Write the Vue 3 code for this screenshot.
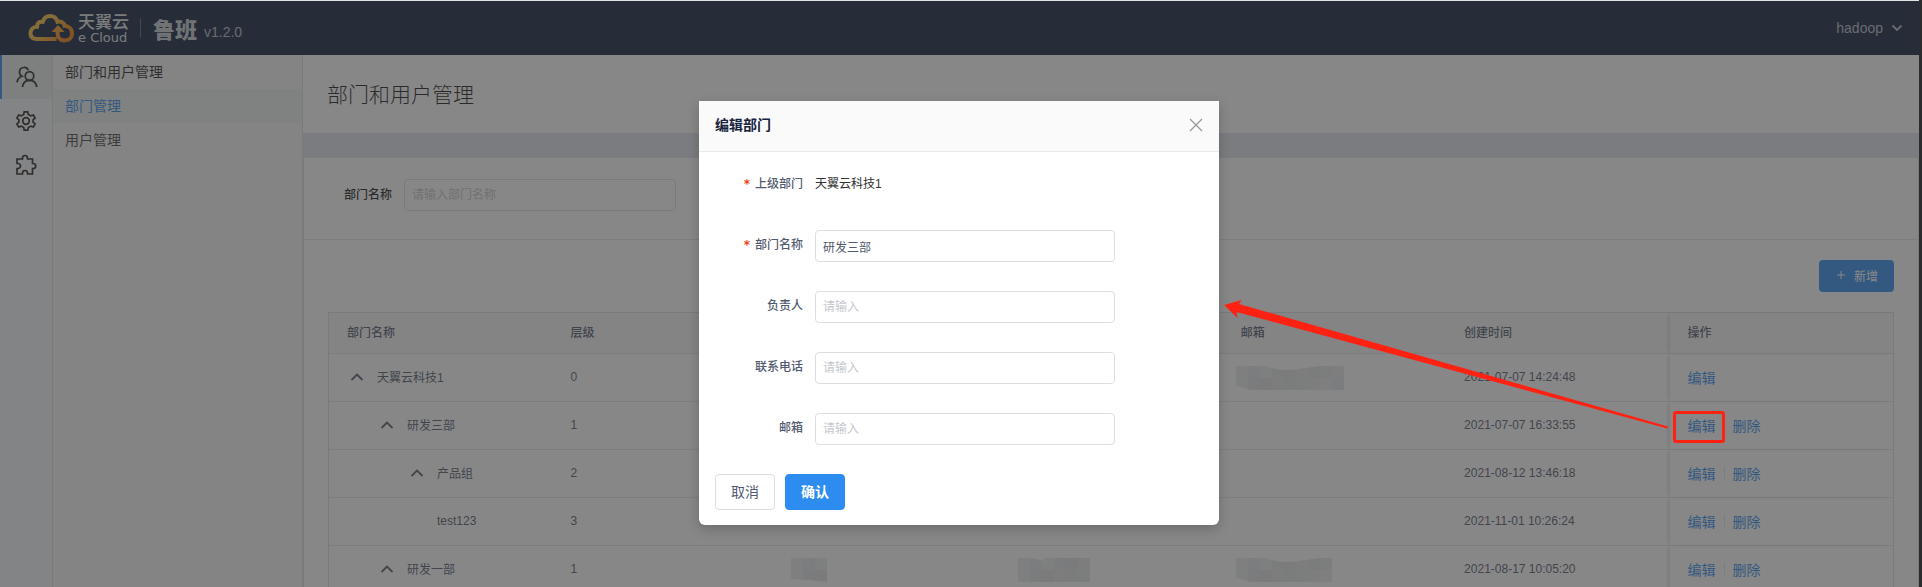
<script setup>
import { ref } from 'vue'

const keyword = ref('')
const form = ref({ name: '研发三部', owner: '', phone: '', email: '' })

const fields = [
  { key: 'name', label: '部门名称', required: true },
  { key: 'owner', label: '负责人' },
  { key: 'phone', label: '联系电话' },
  { key: 'email', label: '邮箱' },
]

const columns = ['部门名称', '层级', '负责人', '联系电话', '邮箱', '创建时间', '操作']

const rows = [
  { name: '天翼云科技1', level: 0, indent: 'indent-0', open: true, time: '2021-07-07 14:24:48', email: 9 },
  { name: '研发三部', level: 1, indent: 'indent-1', open: true, time: '2021-07-07 16:33:55', removable: true },
  { name: '产品组', level: 2, indent: 'indent-2', open: true, time: '2021-08-12 13:46:18', removable: true },
  { name: 'test123', level: 3, indent: 'indent-3', open: false, time: '2021-11-01 10:26:24', removable: true },
  { name: '研发一部', level: 1, indent: 'indent-1', open: true, time: '2021-08-17 10:05:20', removable: true, owner: 3, phone: 6, email: 8 },
]

const shades = ['#ebebea', '#e7e7e7', '#e4e6e9', '#e1e4e4', '#e9eaea', '#e4e7e6', '#e1e4e7', '#e9e9e9', '#e0e2e4']
function tiles(n) {
  const out = []
  for (let i = 0; i < n; i++) {
    out.push({ x: i * 12, y: 0, fill: shades[(i * 2) % 9] })
    out.push({ x: i * 12, y: 12, fill: shades[(i * 2 + 4) % 9] })
  }
  return out
}
</script>

<template>
  <div class="frame">
    <div class="shell">
      <header class="topbar">
        <svg class="cloud" viewBox="0 0 46 30" fill="none">
          <defs>
            <linearGradient id="gold" x1="0" y1="0" x2="1" y2="0.5">
              <stop offset="0" stop-color="#ffcb3c" />
              <stop offset="0.5" stop-color="#f8b53a" />
              <stop offset="1" stop-color="#f57d0c" />
            </linearGradient>
          </defs>
          <path d="M28.500 26H9C5 26 2.500 24 2.500 20.300C2.500 16.500 5.200 13.800 9 13.700C9 10 11.500 8.300 14.800 8.700C16 5 18.500 3 22 3C25.800 3 28.500 5.300 29.500 8.800C33 8 36 9.600 36.600 12.800C41.300 13.200 44 16.300 44 20.300C44 24.800 41 27.500 36.700 27.500C32.300 27.500 29.600 24.500 29.600 20.500V17" stroke="url(#gold)" stroke-width="4" />
          <path d="M23.500 19L30 12L36.500 19z" fill="#f39a25" />
        </svg>
        <div class="brand">
          <span class="brand-cn">天翼云</span>
          <span class="brand-en">e Cloud</span>
        </div>
        <span class="bar"></span>
        <span class="product">鲁班</span>
        <span class="version">v1.2.0</span>
        <button class="account" type="button">
          hadoop
          <svg viewBox="0 0 12 8" fill="none"><path d="M1.500 1.500L6 6L10.500 1.500" stroke="currentColor" stroke-width="1.800" /></svg>
        </button>
      </header>

      <div class="body">
        <nav class="rail">
          <a href="#" class="on" aria-label="用户">
            <svg viewBox="0 0 22 22" fill="none">
              <circle cx="13.500" cy="10" r="4.300" />
              <path d="M6.500 21C7 17 9.500 14.300 13.500 14.300S20.200 17 20.800 21M12.300 4.200C11.500 2.500 9.700 1.300 7.800 1.500C5.300 1.700 3.500 3.700 3.500 6.200C3.500 8 4.500 9.500 6 10.200C3.200 11 1.500 13 1 16.300" />
            </svg>
          </a>
          <a href="#" aria-label="设置">
            <svg viewBox="-1 -1 22 22" fill="none">
              <path d="M8.200.8h3.600l.5 2.600 2.500 1.500 2.500-.9 1.800 3.100-2 1.700v2.400l2 1.700-1.800 3.100-2.500-.9-2.500 1.500-.5 2.600H8.200l-.5-2.600-2.500-1.500-2.500.9-1.800-3.100 2-1.700V8.800l-2-1.700L2.700 4l2.500.9 2.500-1.500z" />
              <circle cx="10" cy="10" r="3.300" />
            </svg>
          </a>
          <a href="#" aria-label="插件">
            <svg viewBox="-1 -1 22 22" fill="none">
              <path d="M1 4h5.500V3a2.500 2.500 0 0 1 5 0v1h5v4.500h.7a2.500 2.500 0 0 1 0 5h-.7V19h-5v-1a2.500 2.500 0 0 0-5 0v1H1v-5.500h1a2.500 2.500 0 0 0 0-5H1z" />
            </svg>
          </a>
        </nav>

        <nav class="menu">
          <div class="menu-title">部门和用户管理</div>
          <a href="#" class="on">部门管理</a>
          <a href="#">用户管理</a>
        </nav>

        <main class="main">
          <h1>部门和用户管理</h1>
          <section class="panel">
            <div class="search">
              <label for="keyword">部门名称</label>
              <input id="keyword" v-model="keyword" type="text" placeholder="请输入部门名称" />
            </div>
            <div class="list">
              <button class="add" type="button">
                <svg viewBox="0 0 10 10" fill="none"><path d="M5 1V9M1 5H9" stroke="currentColor" /></svg>
                新增
              </button>
              <table>
                <thead>
                  <tr>
                    <th v-for="c in columns" :key="c">{{ c }}</th>
                  </tr>
                </thead>
                <tbody>
                  <tr v-for="r in rows" :key="r.name">
                    <td>
                      <div class="node" :class="r.indent">
                        <svg v-if="r.open" viewBox="0 0 14 10" fill="none"><path d="M1.500 8L7 2.500L12.500 8" stroke="currentColor" stroke-width="1.800" /></svg>
                        <span>{{ r.name }}</span>
                      </div>
                    </td>
                    <td>{{ r.level }}</td>
                    <td v-for="k in ['owner', 'phone', 'email']" :key="k" :class="k">
                      <svg v-if="r[k]" class="mosaic" :width="r[k] * 12" height="24">
                        <rect v-for="(t, i) in tiles(r[k])" :key="i" :x="t.x" :y="t.y" width="12" height="12" :fill="t.fill" />
                        <path v-if="k === 'email'" d="M28 0L40 3Q50 5 62 3L84 0zM0 19Q6 23 18 24H0z" fill="#fff" />
                        <path v-if="k === 'phone'" d="M14 0L26 3V0z" fill="#fff" />
                        <path v-if="k === 'owner'" d="M0 21L18 22L36 24H0z" fill="#fff" />
                      </svg>
                    </td>
                    <td>{{ r.time }}</td>
                    <td>
                      <div class="ops">
                        <a href="#">编辑</a>
                        <template v-if="r.removable">
                          <i></i>
                          <a href="#">删除</a>
                        </template>
                      </div>
                    </td>
                  </tr>
                </tbody>
              </table>
            </div>
          </section>
        </main>
      </div>

      <div class="mask">
        <form class="modal" role="dialog" aria-labelledby="modal-title" @submit.prevent>
          <div class="modal-head">
            <h2 id="modal-title">编辑部门</h2>
            <button class="close" type="button" aria-label="关闭">
              <svg viewBox="0 0 14 14" fill="none"><path d="M1 1L13 13M13 1L1 13" stroke="currentColor" stroke-width="1.300" /></svg>
            </button>
          </div>
          <div class="modal-body">
            <div class="field">
              <span class="label"><b>*</b>上级部门</span>
              <span class="value">天翼云科技1</span>
            </div>
            <div v-for="f in fields" :key="f.key" class="field">
              <label class="label" :for="f.key"><b v-if="f.required">*</b>{{ f.label }}</label>
              <input :id="f.key" v-model="form[f.key]" type="text" placeholder="请输入" />
            </div>
            <div class="actions">
              <button type="button">取消</button>
              <button type="submit" class="primary">确认</button>
            </div>
          </div>
        </form>
      </div>

      <svg class="pointer" viewBox="0 0 444 130" fill="#ff2111">
        <path d="M0 5L17.500 0L15 4L444 126.500L443.500 128.500L12.500 12L13.500 18z" />
      </svg>
      <span class="highlight"></span>
    </div>
  </div>
</template>

<style>
body {
  margin: 0;
  background: #2b2c2e;
}
</style>

<style scoped>
* {
  box-sizing: border-box;
}
.frame {
  height: 100vh;
  padding-right: 3px;
  overflow: hidden;
  font-family: "Liberation Sans", "Noto Sans CJK SC", sans-serif;
  font-size: 12px;
  color: #515a6e;
}
.shell {
  position: relative;
  height: 100%;
  display: flex;
  flex-direction: column;
  overflow: hidden;
  border-top: 1px solid #dfe3e5;
  background: #fff;
}
a {
  text-decoration: none;
}
button,
input {
  font: inherit;
}
input {
  height: 32px;
  padding: 0 7px;
  border: 1px solid #dcdee2;
  border-radius: 4px;
  background: #fff;
  color: #515a6e;
}
input::placeholder {
  color: #c5c8ce;
  opacity: 1;
}

.topbar {
  flex: none;
  display: flex;
  align-items: center;
  height: 54px;
  padding: 0 16px 0 28px;
  background: #0d203c;
  color: #fff;
}
.cloud {
  width: 46px;
  height: 30px;
}
.brand {
  display: flex;
  flex-direction: column;
  width: 51px;
  margin: 2px 0 0 4px;
  white-space: nowrap;
  color: #dfe1e4;
}
.brand-cn {
  font-size: 17px;
  line-height: 17px;
  font-weight: 500;
}
.brand-en {
  font-family: "DejaVu Sans", sans-serif;
  font-size: 13px;
  line-height: 14px;
}
.bar {
  width: 1px;
  height: 20px;
  margin: 0 12px 0 11px;
  background: #596579;
}
.product {
  font-size: 22px;
  font-weight: 900;
  color: #c8ccd2;
}
.version {
  margin: 8px 0 0 7px;
  font-size: 14px;
  color: #b4bac4;
}
.account {
  display: flex;
  align-items: center;
  gap: 8px;
  margin-left: auto;
  padding: 0;
  border: 0;
  background: none;
  font-size: 14px;
  color: #b4bac4;
}
.account svg {
  width: 12px;
  height: 8px;
}

.body {
  flex: 1;
  display: flex;
  min-height: 0;
}
.rail {
  flex: none;
  width: 53px;
  border-right: 1px solid #dcdee2;
  background: #f6f7f9;
}
.rail a {
  display: flex;
  align-items: center;
  justify-content: center;
  height: 44px;
}
.rail a.on {
  border-left: 2px solid #2d8cf0;
  background: #e8eaec;
}
.rail svg {
  width: 22px;
  height: 22px;
  stroke: #222;
  stroke-width: 1.7;
}
.menu {
  flex: none;
  width: 250px;
  border-right: 1px solid #dcdee2;
  background: #f8f8f9;
  font-size: 14px;
  line-height: 34px;
}
.menu-title,
.menu a {
  display: block;
  padding-left: 12px;
  color: #444;
}
.menu-title {
  color: #222;
}
.menu a.on {
  background: #eeeff1;
  color: #2d8cf0;
}
.main {
  flex: 1;
  min-width: 0;
  background: #e1e3ec;
}
h1 {
  height: 78px;
  margin: 0 0 25px;
  padding-left: 24px;
  background: #fff;
  font-size: 21px;
  line-height: 80px;
  font-weight: 300;
  color: #17181a;
}
.panel {
  min-height: 480px;
  border: solid #dcdee2;
  border-width: 0 1px;
  background: #fff;
}
.search {
  display: flex;
  align-items: center;
  height: 82px;
  padding: 0 40px 8px;
  border-bottom: 1px solid #e4e5e8;
}
.search label {
  margin-right: 12px;
  padding-bottom: 2px;
  font-weight: 500;
  color: #17181a;
}
.search input {
  width: 272px;
}
.list {
  display: flex;
  flex-direction: column;
  padding: 20px 24px;
}
.add {
  align-self: flex-end;
  display: flex;
  align-items: center;
  gap: 8px;
  height: 32px;
  margin-bottom: 20px;
  padding: 0 16px 2px 17px;
  border: 0;
  border-radius: 4px;
  background: #2d8cf0;
  color: #fff;
}
.add svg {
  width: 10px;
  height: 10px;
}
table {
  width: 100%;
  table-layout: fixed;
  border-collapse: separate;
  border-spacing: 0;
  border: solid #dcdee2;
  border-width: 1px 1px 0;
}
th,
td {
  height: 48px;
  padding: 0 18px 2px;
  border-bottom: 1px solid #e4e6e9;
  text-align: left;
}
th {
  height: 41px;
  padding-bottom: 4px;
  background: #f8f8f9;
  font-weight: 500;
}
th:last-child,
td:last-child {
  box-shadow: -3px 0 5px -2px rgba(0, 0, 0, 0.18);
}
td.email {
  padding: 0 13px;
}
td.owner {
  padding: 0 15px;
}
td.phone {
  padding: 0 19px;
}
.mosaic {
  display: block;
  overflow: hidden;
}
.node {
  display: flex;
  align-items: center;
  gap: 13px;
}
.node svg {
  width: 14px;
  height: 10px;
}
.indent-0 {
  padding-left: 3px;
}
.indent-1 {
  padding-left: 33px;
}
.indent-2 {
  padding-left: 63px;
}
.indent-3 {
  padding-left: 90px;
}
.ops {
  display: flex;
  align-items: center;
  gap: 8px;
  font-size: 14px;
}
.ops a {
  color: #2d8cf0;
}
.ops i {
  width: 1px;
  height: 13px;
  background: #e4e6e9;
}

.mask {
  position: absolute;
  inset: 0;
  padding: 100px 1px 0 0;
  background: rgba(55, 55, 55, 0.6);
}
.modal {
  width: 520px;
  margin: 0 auto;
  border-radius: 0 0 6px 6px;
  background: #fff;
  box-shadow: 0 4px 12px rgba(0, 0, 0, 0.2);
}
.modal-head {
  display: flex;
  align-items: center;
  justify-content: space-between;
  height: 51px;
  padding: 0 16px 2px;
  border-bottom: 1px solid #e8eaec;
  background: #fafafa;
}
h2 {
  margin: 0;
  padding-bottom: 2px;
  font-size: 14px;
  font-weight: 700;
  color: #17233d;
}
.close {
  display: flex;
  padding: 0;
  border: 0;
  background: none;
  color: #999;
}
.close svg {
  width: 14px;
  height: 14px;
}
.modal-body {
  padding: 17px 16px 15px;
}
.field {
  display: flex;
  align-items: center;
  gap: 12px;
  height: 32px;
  margin-bottom: 29px;
}
.label {
  width: 88px;
  padding-bottom: 5px;
  text-align: right;
  font-weight: 500;
}
.label b {
  margin-right: 5px;
  font-family: "DejaVu Sans", sans-serif;
  font-weight: 700;
  color: #ed4014;
}
.value {
  padding-bottom: 5px;
  color: #333;
}
.field input {
  width: 300px;
}
.actions {
  display: flex;
  gap: 10px;
}
.actions button {
  width: 60px;
  height: 36px;
  padding: 0 0 3px;
  border: 1px solid #dcdee2;
  border-radius: 4px;
  background: #fff;
  font-size: 14px;
  color: #515a6e;
}
.actions .primary {
  border-color: #2d8cf0;
  background: #2d8cf0;
  font-weight: 700;
  color: #fff;
}

.pointer {
  position: absolute;
  top: 299px;
  right: 251px;
  width: 444px;
  height: 130px;
}
.highlight {
  position: absolute;
  top: 410px;
  right: 194px;
  width: 52px;
  height: 32px;
  border: 3px solid #ff2111;
  border-radius: 3px;
}
</style>
